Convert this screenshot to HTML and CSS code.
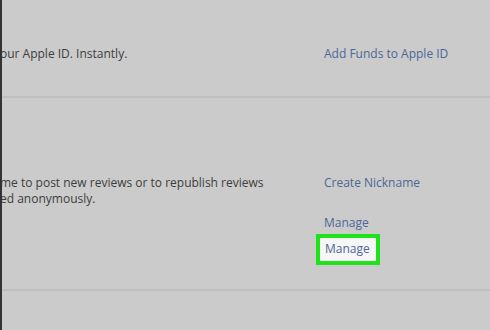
FILE: index.html
```html
<!DOCTYPE html>
<html lang="en">
<head>
  <meta charset="UTF-8">
  <title>Account Settings</title>
  <link rel="stylesheet" href="styles.css">
</head>
<body>
  <div class="page">
    <div class="row funds">
      <div class="desc"><p>our Apple ID. Instantly.</p></div>
      <div class="links"><a href="#">Add Funds to Apple ID</a></div>
    </div>
    <div class="row nick">
      <div class="desc"><p>me to post new reviews or to republish reviews<br>ed anonymously.</p></div>
      <div class="links">
        <a href="#">Create Nickname</a>
        <a href="#" class="gap">Manage</a>
        <a href="#" class="marked">Manage</a>
      </div>
    </div>
    <div class="row last"></div>
  </div>
</body>
</html>
```

FILE: styles.css
```css
html, body { margin: 0; height: 100%; overflow: hidden; }
body { background: #cbcbcb; font-family: "Open Sans", "Noto Sans", sans-serif; font-size: 12px; color: #3d3d3d; }
.page { border-left: 2px solid #333; height: 100%; box-sizing: border-box; }
.row { display: grid; grid-template-columns: 322px 1fr; align-items: start; border-bottom: 2px solid #bfbfbf; box-sizing: border-box; }
.desc { overflow: hidden; }
.desc p { margin: 0 0 0 -2px; line-height: 16px; }
.links { display: flex; flex-direction: column; align-items: flex-start; }
.links a { color: #4b6896; text-decoration: none; line-height: 16px; }
.funds { height: 98px; padding-top: 46px; }
.nick { height: 193px; padding-top: 77px; }
.gap { margin-top: 24px; }
.marked { margin: 3px 0 0 -8px; padding: 3px 6px 4px 5px; border: 4px solid #1ee31a; background: #f6f6f6; }
.last { border-bottom: none; }
```
